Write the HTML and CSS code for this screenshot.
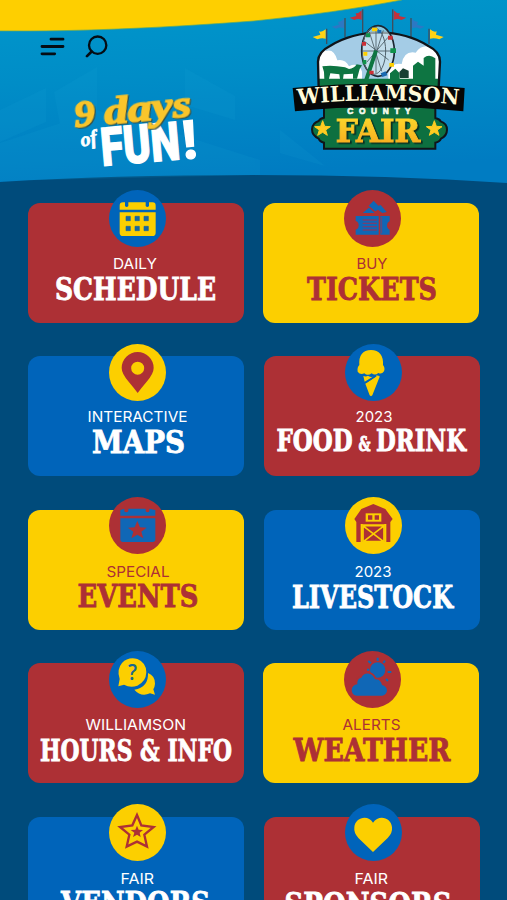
FILE: index.html
```html
<!DOCTYPE html>
<html lang="en">
<head>
<meta charset="utf-8">
<meta name="viewport" content="width=device-width, initial-scale=1">
<title>Williamson County Fair</title>
<link rel="stylesheet" href="styles.css">
</head>
<body>
<header class="header">
  <svg class="header-bg" viewBox="0 0 507 190" aria-hidden="true">
    <defs>
      <linearGradient id="sky" x1="0" y1="0" x2="0.15" y2="1"><stop offset="0" stop-color="#0097cb"/><stop offset="0.45" stop-color="#008dc7"/><stop offset="1" stop-color="#007cc2"/></linearGradient>
    </defs>
    <path d="M0 0H507V183Q390 175 254 175Q110 175 0 182Z" fill="url(#sky)"/>
    <g fill="#18a0d2" opacity=".14">
      <path d="M0 110L46 88V122L0 142ZM54 92L97 67V110L125 120L60 125ZM185 68L235 96V120L185 105ZM0 143L70 120L150 125L260 160V175L0 181Z"/>
      <path d="M280 130L325 166L280 153Z"/>
    </g>
    <path d="M0 0H402Q335 13 254 21Q110 32 0 31Z" fill="#fecf00"/>
    <path d="M402 0Q335 13 254 21Q110 32 0 31" fill="none" stroke="#55a86a" stroke-width=".7"/>
  </svg>
  <div class="header-left">
    <nav class="nav">
      <svg class="nav-icon" viewBox="120 105 75 68" width="25" height="23" role="img" aria-label="Menu"><path d="M153 117H189M126 139H189M126 161H164" stroke="#050d14" stroke-width="8.500" stroke-linecap="round"/></svg>
      <svg class="nav-icon" viewBox="255 105 75 68" width="25" height="23" role="img" aria-label="Search"><circle cx="293" cy="135" r="26" fill="none" stroke="#050d14" stroke-width="7"/><path d="M275 154L261 168" stroke="#050d14" stroke-width="8" stroke-linecap="round"/></svg>
    </nav>
    <svg class="tagline" viewBox="0 0 390 240" width="130" height="80">
      <g transform="rotate(-5 93 225)">
        <text class="fun" x="91" y="225" textLength="237" lengthAdjust="spacingAndGlyphs">FUN</text>
        <text class="fun" x="337" y="225" textLength="42" lengthAdjust="spacingAndGlyphs">!</text>
      </g>
      <text class="script of" transform="translate(29 167) rotate(-12)" textLength="50" lengthAdjust="spacingAndGlyphs">of</text>
      <g class="days" transform="translate(10 109) rotate(-5.500)">
        <text class="script" x="0" y="0" textLength="62" lengthAdjust="spacingAndGlyphs">9</text>
        <text class="script" x="90" y="0" textLength="262" lengthAdjust="spacingAndGlyphs">days</text>
      </g>
    </svg>
  </div>
  <svg class="logo" viewBox="0 0 600 480" width="200" height="160" role="img" aria-label="Williamson County Fair">
    <defs>
      <linearGradient id="gold" x1="0" y1="0" x2="0" y2="1"><stop offset="0" stop-color="#ffdf2e"/><stop offset="1" stop-color="#f5a51c"/></linearGradient>
      <clipPath id="dome"><path d="M116 262L114 185Q115 155 150 138Q215 98 298 98Q382 98 445 138Q480 155 480 185L476 262Z"/></clipPath>
    </defs>
    <g stroke="#404d5c" stroke-width="4"><path d="M140 86V132M195 54V112M248 28V98M338 28V98M393 54V112M447 86V132"/></g>
    <path d="M137 88Q125 98 117 94L121 104L98 111L112 118Q125 112 137 116ZM450 88Q462 98 470 94L468 104L491 111L478 118Q462 112 450 116Z" fill="#ffd316"/>
    <path d="M192 56Q181 68 174 65L177 74L155 80L168 86Q180 80 192 85ZM396 56Q407 68 414 65L411 74L434 80L420 86Q408 80 396 85Z" fill="#2c78c4"/>
    <path d="M245 31Q233 43 227 39L229 48L209 53L223 60Q235 54 245 60ZM341 31Q353 43 360 39L357 48L379 53L364 60Q352 54 341 60Z" fill="#c3313a"/>
    <path d="M116 262L114 185Q115 155 150 138Q215 98 298 98Q382 98 445 138Q480 155 480 185L476 262Z" fill="#a4cce6"/>
    <g clip-path="url(#dome)">
      <path d="M100 163Q115 136 138 153Q162 145 172 181Q195 176 207 199Q235 185 246 215V245H100ZM325 220Q335 186 365 192Q372 151 407 158Q430 126 465 148L490 155V250H325Z" fill="#fff"/>
      <path d="M110 236H490V270H110Z" fill="#0e7542"/>
      <path d="M127 199Q155 194 195 202L207 207Q222 206 230 193L246 196L239 207L231 236H219V221L191 223L189 238H180L178 223L151 220L146 240H133L132 216ZM399 240V197L414 185L431 197V174Q447 160 466 175V240ZM330 220L346 206L359 220V238H330Z" fill="#0e7542"/>
      <path d="M358 216L369 205L386 212V234H360Z" fill="#183f32"/>
    </g>
    <path d="M116 262L114 185Q115 155 150 138Q215 98 298 98Q382 98 445 138Q480 155 480 185L476 262" fill="none" stroke="#101419" stroke-width="7"/>
    <ellipse cx="294" cy="153" rx="49" ry="76" fill="#d2e6ee" fill-opacity=".65" stroke="#1a2530" stroke-width="5"/>
    <ellipse cx="282" cy="153" rx="35" ry="70" fill="none" stroke="#52636d" stroke-width="3"/>
    <path d="M288 80V220M252 123L326 180M260 187L324 112M268 96L305 214M310 91L272 211M246 153H335" stroke="#475860" stroke-width="2.5"/>
    <path d="M288 152L257 245" stroke="#0e7542" stroke-width="12"/>
    <path d="M276 83h16v11h-16zM250 156h12v11h-12zM328 189h14v11h-14z" fill="#fecf00"/><path d="M246 126h12v11h-12zM324 107h14v12h-14zM268 212h13v11h-13z" fill="#cc3037"/><path d="M258 100h12v12h-12zM331 145h17v14h-17zM248 180h11v13h-11z" fill="#10924c"/><path d="M292 90h12v10h-12zM302 220l15-6 5 12-15 5z" fill="#1969b0"/>
    <path d="M132 320H466V354Q479 357 482 364Q501 370 501 389Q501 407 483 416Q479 426 466 428V446H132V428Q119 425 116 416Q96 407 96 388Q97 369 116 363Q120 355 132 353Z" fill="#0d7040" stroke="#101419" stroke-width="6"/>
    <path d="M38 264Q292 238 554 264L550 334Q295 306 45 334Z" fill="#050606"/>
    <path id="arc" d="M53 314Q294 288 542 315" fill="none"/>
    <text class="logo-name"><textPath href="#arc" textLength="484" lengthAdjust="spacingAndGlyphs">WILLIAMSON</textPath></text>
    <text class="logo-county" x="202" y="343" textLength="190" lengthAdjust="spacing">COUNTY</text>
    <text class="logo-fair" x="167" y="426" textLength="254" lengthAdjust="spacingAndGlyphs">FAIR</text>
    <path id="logo-star" d="M128 362L134 379L151 380L137 390L142 406L128 397L113 406L118 390L104 380L122 379Z" fill="#ffcc21" stroke="#ffcc21" stroke-width="3"/>
    <use href="#logo-star" x="335"/>
  </svg>
</header>

<main class="grid">
  <a class="card red">
    <svg class="badge" viewBox="266 15 171 171"><circle cx="351.500" cy="100.500" r="85.500" fill="#0064ba"/><path d="M298 74V62Q298 52 308 52H314V63Q319 69 324 63V52H376V63Q381 69 386 63V52H397Q406 52 406 62V74ZM298 82H406V143Q406 153 396 153H308Q298 153 298 143Z" fill="#fccf00"/><path d="M317 94h13v13h-13zM344 94h13v13h-13zM371 94h13v13h-13zM317 124h13v13h-13zM344 124h13v13h-13zM371 124h13v13h-13z" fill="#1767a0" stroke="#1767a0" stroke-width="2"/></svg>
    <svg class="caption" viewBox="0 0 216 120"><text class="label" x="85" y="66" textLength="44" lengthAdjust="spacingAndGlyphs">DAILY</text><text class="title" x="27" y="97" textLength="161" lengthAdjust="spacingAndGlyphs">SCHEDULE</text></svg>
  </a>
  <a class="card yellow">
    <svg class="badge" viewBox="271 15 171 171"><circle cx="356.500" cy="100.500" r="85.500" fill="#ad3035"/><path d="M306 93H375V149H306V134Q315 132 315 121Q315 110 306 108ZM380 93H408V108Q400 112 400 121Q400 131 408 134V149H380ZM327 84L346 68L363 84ZM345 62L360 47L374 62L381 60L399 81L386 84L373 74L365 79Z" fill="#1067b6"/><path d="M327 105H370M327 115H370M327 125H370M327 135H370" stroke="#733f72" stroke-width="4"/><path d="M384 96V145" stroke="#6c4777" stroke-width="3"/></svg>
    <svg class="caption" viewBox="0 0 216 120"><text class="label" x="93.500" y="66" textLength="31" lengthAdjust="spacingAndGlyphs">BUY</text><text class="title" x="44" y="97" textLength="130" lengthAdjust="spacingAndGlyphs">TICKETS</text></svg>
  </a>
  <a class="card blue">
    <svg class="badge" viewBox="266 24 171 171"><circle cx="351.500" cy="109.500" r="85.500" fill="#fccf00"/><path fill-rule="evenodd" d="M352 171Q342 157 325 137Q304 113 304 96A48 48 0 0 1 400 96Q400 113 379 137Q362 157 352 171ZM352 77A19.500 19.500 0 1 0 352 116A19.500 19.500 0 1 0 352 77Z" fill="#ad3035"/></svg>
    <svg class="caption" viewBox="0 0 216 120"><text class="label" x="59.500" y="66" textLength="100" lengthAdjust="spacingAndGlyphs">INTERACTIVE</text><text class="title" x="64" y="96.500" textLength="93" lengthAdjust="spacingAndGlyphs">MAPS</text></svg>
  </a>
  <a class="card red">
    <svg class="badge" viewBox="273 24 171 171"><circle cx="358.500" cy="109.500" r="85.500" fill="#0064ba"/><path d="M316 87Q313 43 351 42Q389 43 387 87Q394 96 390 106Q383 116 373 111Q363 120 353 112Q341 121 331 112Q319 118 311 107Q309 94 316 87ZM328 120Q336 123 342 119Q352 126 359 121L332 137ZM334 143L369 119L377 122L355 178Q351 183 347 178ZM366 118L377 120L374 127Z" fill="#fccf00"/><path d="M336 139L366 120" stroke="#0064ba" stroke-width="4"/></svg>
    <svg class="caption" viewBox="0 0 216 120"><text class="label" x="91.500" y="66" textLength="37" lengthAdjust="spacingAndGlyphs">2023</text><text class="title small" x="12.500" y="95" textLength="76" lengthAdjust="spacingAndGlyphs">FOOD</text><text class="title amp" x="94.500" y="95" textLength="12" lengthAdjust="spacingAndGlyphs">&amp;</text><text class="title small" x="112" y="95" textLength="90" lengthAdjust="spacingAndGlyphs">DRINK</text></svg>
  </a>
  <a class="card yellow">
    <svg class="badge" viewBox="266 22 171 171"><circle cx="351.500" cy="107.500" r="85.500" fill="#ad3035"/><path d="M300 78V61L312 57V65Q318 71 324 65V57H376V65Q382 71 387 65V57L405 61V78ZM300 86H405V149Q405 157 397 157H308Q300 157 300 149Z" fill="#1067b6"/><path d="M351 94L359 113L379 114L363 126L369 146L351 135L333 146L339 126L323 114L343 113Z" fill="#ad3035"/></svg>
    <svg class="caption" viewBox="0 0 216 120"><text class="label" x="78.500" y="66.500" textLength="63" lengthAdjust="spacingAndGlyphs">SPECIAL</text><text class="title" x="49.500" y="97" textLength="121" lengthAdjust="spacingAndGlyphs">EVENTS</text></svg>
  </a>
  <a class="card blue">
    <svg class="badge" viewBox="273 22 171 171"><circle cx="358.500" cy="107.500" r="85.500" fill="#fccf00"/><path d="M301 88L322 58L358 43L394 58L416 88L409 97V157H397V103H320V157H307V97Z" fill="#ad3035"/><path d="M326 105H391V157H326Z" fill="#ad3035"/><path d="M335 71H382V96H335Z" fill="#fccf00"/><path d="M342 77h13v13h-13zM362 77h13v13h-13z" fill="#ad3035"/><path d="M327 108H390V156H327ZM329 110L388 155M388 110L329 155" fill="none" stroke="#fccf00" stroke-width="5"/></svg>
    <svg class="caption" viewBox="0 0 216 120"><text class="label" x="90.500" y="67" textLength="37" lengthAdjust="spacingAndGlyphs">2023</text><text class="title" x="28" y="97.500" textLength="161" lengthAdjust="spacingAndGlyphs">LIVESTOCK</text></svg>
  </a>
  <a class="card red">
    <svg class="badge" viewBox="266 21 171 171"><circle cx="351.500" cy="106.500" r="85.500" fill="#0064ba"/><path d="M383 87Q404 95 404 119Q403 130 399 136L404 152L389 148Q362 160 342 137Q385 130 383 87Z" fill="#fccf00"/><path d="M294 127L298 105Q288 77 305 57Q323 38 351 45Q378 56 378 85Q377 113 351 125Q330 133 311 122Z" fill="#fccf00"/><text class="question" x="323" y="107" textLength="27" lengthAdjust="spacingAndGlyphs">?</text></svg>
    <svg class="caption" viewBox="0 0 216 120"><text class="label" x="57.500" y="67" textLength="100.500" lengthAdjust="spacingAndGlyphs">WILLIAMSON</text><text class="title small" x="12" y="97.500" textLength="192" lengthAdjust="spacingAndGlyphs">HOURS &amp; INFO</text></svg>
  </a>
  <a class="card yellow">
    <svg class="badge" viewBox="271 21 171 171"><circle cx="356.500" cy="106.500" r="85.500" fill="#ad3035"/><circle cx="372" cy="78" r="23" fill="#1067b6"/><path d="M372 41V51M394 50L389 57M402 84H413M397 105L403 111M340 77H347M344 51L352 58" stroke="#1067b6" stroke-width="6"/><path d="M310 155Q294 153 294 137Q296 123 311 121Q309 104 323 101Q331 86 346 89Q358 91 364 106Q381 105 385 123Q399 126 400 140Q398 152 386 155Z" fill="#ad3035" stroke="#ad3035" stroke-width="10"/><path d="M310 155Q294 153 294 137Q296 123 311 121Q309 104 323 101Q331 86 346 89Q358 91 364 106Q381 105 385 123Q399 126 400 140Q398 152 386 155Z" fill="#1067b6"/></svg>
    <svg class="caption" viewBox="0 0 216 120"><text class="label" x="79.500" y="67" textLength="58" lengthAdjust="spacingAndGlyphs">ALERTS</text><text class="title" x="30.500" y="97.500" textLength="157" lengthAdjust="spacingAndGlyphs">WEATHER</text></svg>
  </a>
  <a class="card blue">
    <svg class="badge" viewBox="326 28 171 171"><circle cx="411.500" cy="113.500" r="85.500" fill="#fccf00"/><path d="M410 61L423 92L460 97L432 120L440 156L410 141L379 156L387 120L359 97L396 92Z" fill="none" stroke="#ad3035" stroke-width="7"/><path d="M410 93L415 105L428 106L418 114L421 127L410 120L398 127L402 114L391 106L405 105Z" fill="#ad3035"/></svg>
    <svg class="caption" viewBox="0 0 216 120"><text class="label" x="92.500" y="66.500" textLength="33.500" lengthAdjust="spacingAndGlyphs">FAIR</text><text class="title" x="33" y="97" textLength="149" lengthAdjust="spacingAndGlyphs">VENDORS</text></svg>
  </a>
  <a class="card red">
    <svg class="badge" viewBox="1034 28 171 171"><circle cx="1119.500" cy="113.500" r="85.500" fill="#0064ba"/><path d="M1118 172L1074 130Q1060 115 1062 98C1064 68 1103 58 1118 84C1135 58 1173 68 1175 98Q1177 115 1162 130Z" fill="#fccf00"/></svg>
    <svg class="caption" viewBox="0 0 216 120"><text class="label" x="90.500" y="67" textLength="33.500" lengthAdjust="spacingAndGlyphs">FAIR</text><text class="title" x="20.500" y="97.500" textLength="167" lengthAdjust="spacingAndGlyphs">SPONSORS</text></svg>
  </a>
</main>
</body>
</html>
```
FILE: styles.css
```css
* { box-sizing: border-box; }
html, body { height: 100%; }
body {
  margin: 0;
  width: 507px;
  height: 900px;
  overflow: hidden;
  background: #004b7b;
  font-family: Inter, "Liberation Sans", sans-serif;
}
svg { display: block; }
.header {
  position: relative;
  display: flex;
  height: 202.700px;
}
.header-bg {
  position: absolute;
  inset: 0 auto auto 0;
  width: 507px;
  height: 190px;
}
.header-left {
  position: relative;
  width: 280px;
  padding: 35px 0 0 40px;
}
.nav { display: flex; gap: 20px; }
.tagline { margin: 33px 0 0 32px; overflow: visible; }
.logo { position: relative; overflow: visible; }
.script {
  font-family: "Liberation Serif", serif;
  font-style: italic;
  font-weight: 700;
}
.days {
  font-size: 116px;
  fill: #f9c52b;
  stroke: #f9c52b;
  stroke-width: 5px;
  filter: drop-shadow(3px 3px 0 #344e45);
}
.of { font-size: 60px; fill: #fff; stroke: #fff; stroke-width: 2px; }
.fun {
  font-family: "Roboto", "Liberation Sans", sans-serif;
  font-size: 160px;
  font-weight: 900;
  fill: #fff;
  stroke: #fff;
  stroke-width: 4px;
}
.logo-name {
  font-family: "DejaVu Serif", serif;
  font-size: 64px;
  font-weight: 700;
  fill: #fffbd9;
}
.logo-county {
  font-family: "Liberation Sans", sans-serif;
  font-size: 25px;
  font-weight: 700;
  fill: #f6faee;
  stroke: #f6faee;
  stroke-width: 2px;
}
.logo-fair {
  font-family: "DejaVu Serif", serif;
  font-size: 96px;
  font-weight: 700;
  fill: url(#gold);
  stroke: url(#gold);
  stroke-width: 3px;
  filter: drop-shadow(5px 4px 0 #0a2b20);
}

.grid {
  display: grid;
  grid-template-columns: 216px 216px;
  grid-auto-rows: 120px;
  gap: 33.500px 20px;
  padding-left: 28px;
}
.card {
  position: relative;
  border-radius: 12px;
  color: #fff;
}
.red { background: #ad3035; }
.yellow { background: #fccf00; color: #ad3035; }
.blue { background: #0064ba; }
.card.yellow:nth-child(even) { margin: 0 1px 0 -1px; }
.badge {
  position: absolute;
  top: -12.500px;
  left: 80.500px;
  width: 57px;
  height: 57px;
}
.card.yellow:nth-child(even) .badge { left: 81px; }
.caption {
  position: relative;
  width: 216px;
  height: 120px;
  overflow: visible;
}
.label {
  font-family: Inter, "Liberation Sans", sans-serif;
  font-size: 15px;
  font-weight: 400;
  fill: currentColor;
}
.title {
  font-family: "DejaVu Serif", serif;
  font-size: 32.500px;
  font-weight: 700;
  fill: currentColor;
  stroke: currentColor;
  stroke-width: .9px;
}
.title.small { font-size: 29px; }
.title.amp { font-size: 20px; }
.question {
  font-family: "Open Sans", sans-serif;
  font-size: 62px;
  font-weight: 600;
  fill: #17678e;
}
```
